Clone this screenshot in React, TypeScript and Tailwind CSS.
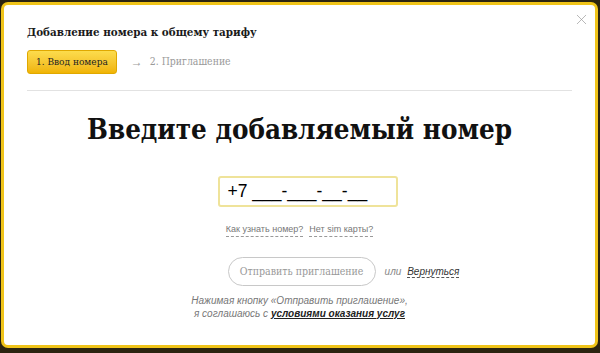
import { X } from 'lucide-react';

const serif = "font-['DejaVu_Serif',serif] font-stretch-condensed";
const sans = "font-['Liberation_Sans',Arial,sans-serif]";

export default function App() {
  return (
    <div className="w-[600px] h-[353px] bg-[#2b2410] pl-[1px] pr-[2px] pt-[2px] pb-[5px]">
      <div className="relative h-full rounded-[7px] border-[3px] border-[#f0c419] bg-white">
        <button className="absolute right-[5px] top-[6px] text-[#9a9a9a]">
          <X className="h-[17px] w-[17px]" strokeWidth={1} />
        </button>

        <div className="px-[23px] pt-[19px]">
          <h1 className={`${serif} text-[11.5px] font-bold leading-[16px] text-[#1a1a1a]`}>Добавление номера к общему тарифу</h1>
          <div className="mt-[10px] flex items-center">
            <span className={`${serif} rounded-[3px] border border-[#e0a800] bg-gradient-to-b from-[#fcdc4c] to-[#f0b400] px-[8px] py-[2px] text-[10px] leading-[18px] text-[#222]`}>
              1. Ввод номера
            </span>
            <span className="ml-[14px] text-[12px] text-[#999]">→</span>
            <span className={`${serif} ml-[7px] text-[10.4px] text-[#9a9a9a]`}>2. Приглашение</span>
          </div>
          <div className="mt-[16px] h-px bg-[#e2e2e2]" />
        </div>

        <div className="flex flex-col items-center">
          <h2 className={`${serif} mt-[25px] text-[27.5px] font-bold leading-none text-[#111]`}>Введите добавляемый номер</h2>

          <div className={`${sans} ml-[16px] mt-[32px] flex h-[31px] w-[180px] items-center rounded-[3px] border-2 border-[#efe39a] pl-[8px] text-[17.5px] text-black`}>
            +7 ___-___-__-__
          </div>

          <div className={`${sans} mt-[16px] flex gap-[6px] text-[9px] text-[#777]`}>
            <a className="border-b border-dashed border-[#999]">Как узнать номер?</a>
            <a className="border-b border-dashed border-[#999]">Нет sim карты?</a>
          </div>

          <div className="mt-[20px] flex items-center gap-[9px] pl-[88px]">
            <button className={`${serif} h-[29px] w-[148px] rounded-full border border-[#c8c8c8] text-[10.5px] text-[#999]`}>
              Отправить приглашение
            </button>
            <span className={`${sans} text-[10px] italic text-[#888]`}>
              или <a className="ml-[3px] border-b border-dashed border-[#555] text-[10px] text-[#333]">Вернуться</a>
            </span>
          </div>

          <p className={`${sans} mt-[8px] text-center text-[10px] italic leading-[13px] text-[#777]`}>
            Нажимая кнопку «Отправить приглашение»,<br />
            я соглашаюсь с <a className="font-bold text-[#222] underline">условиями оказания услуг</a>
          </p>
        </div>
      </div>
    </div>
  );
}
